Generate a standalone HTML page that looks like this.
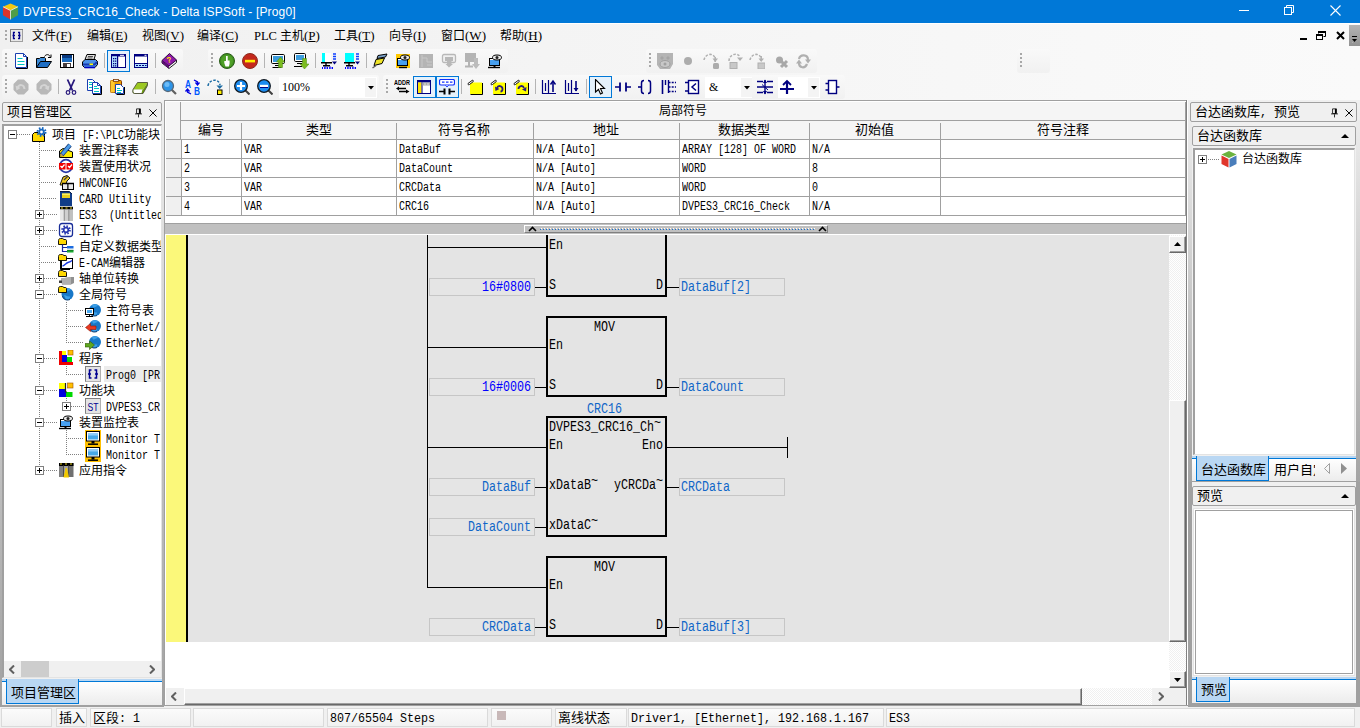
<!DOCTYPE html>
<html lang="zh-CN"><head><meta charset="utf-8"><title>DVPES3_CRC16_Check - Delta ISPSoft - [Prog0]</title>
<style>
html,body{margin:0;padding:0}
body{width:1360px;height:728px;overflow:hidden;background:#f0f0f0;position:relative;
 font:12px "Liberation Mono","Noto Sans CJK SC",monospace;color:#000;line-height:1}
div,span,svg{position:absolute;box-sizing:border-box;white-space:nowrap}
span.l12,span.l13,span.l14{position:static;display:inline-block;transform-origin:0 50%;font-family:"Liberation Mono",monospace}
span.l12{transform:scaleX(.8333)}
span.l13{transform:scaleX(.8974)}
span.l14{transform:scaleX(.8333)}
.t{position:absolute;line-height:14px;height:14px}
.f13{font-size:13px}
.f14{font-size:14px}
/* title bar */
#title{left:0;top:0;width:1360px;height:23px;background:#0078d7}
#title .cap{left:23px;top:5px;font:12px "Liberation Sans",sans-serif;color:#fff;letter-spacing:.15px;line-height:14px}
/* menu */
#menu{left:0;top:23px;width:1360px;height:78px;background:linear-gradient(90deg,#f0f0f0,#fafafa)}
#menu .mi{top:6px;font:12px "Liberation Serif","Noto Sans CJK SC",serif;line-height:14px}
#menu .mi i{font-style:normal;font-size:13px}
#menu .mi u{text-decoration:underline}
/* toolbars */
.tb{background:linear-gradient(#f9f9f9,#f1f1f1);border-radius:3px;height:24px}
.grip{width:2px;height:16px;top:4px;background:repeating-linear-gradient(#a8a8a8 0,#a8a8a8 2px,transparent 2px,transparent 4px)}
.sep{width:1px;height:15px;top:4px;background:#b4b4b4}
.sel{background:#e5f1fb;border:1px solid #0078d7}
.ic{width:16px;height:16px}
/* panels */
.hdr{border:1px solid #a0a0a0;border-radius:2px;background:#f0f0f0}
.sunk{background:#fff;border:2px solid #a0a0a0;border-right:1px solid #e3e3e3;border-bottom:1px solid #e3e3e3}
.tabstrip{background:linear-gradient(#fff,#ececec);border-top:2px solid #b9d7f3}
.tabstrip:before{content:'';position:absolute;left:0;right:0;top:0;height:1px;background:#0078d7}
.tab{background:#b9d7f3;border:1px solid #0078d7;border-top:none}
.sp{background:#f0f0f0;border:1px solid #fff;box-shadow:inset -1px -1px 0 #a0a0a0, 1px 1px 0 #696969}
.td{font-style:normal;position:relative;top:-4px}
</style></head>
<body>
<div id="title"><svg style="left:2px;top:3px" width="17" height="17" viewBox="0 0 18 18"><path d="M9 0.5 L17 4 L9 8 L1 4Z" fill="#f2c811"/><path d="M1 4 L9 8 L9 17.5 L1 13Z" fill="#d8342c"/><path d="M17 4 L9 8 L9 17.5 L17 13Z" fill="#4f9d4a"/><path d="M9 8 L9 17.5 M1 4 L9 8 L17 4" stroke="#fff" stroke-width=".8" fill="none"/></svg><div class="cap">DVPES3_CRC16_Check - Delta ISPSoft - [Prog0]</div><svg style="left:1239px;top:10px" width="11" height="2"><rect width="10" height="1" fill="#fff"/></svg><svg style="left:1284px;top:5px" width="10" height="10" viewBox="0 0 10 10" fill="none" stroke="#fff" stroke-width="1"><rect x=".5" y="2.5" width="7" height="7"/><path d="M2.5 2.5V.5H9.5V7.5H7.5"/></svg><svg style="left:1330px;top:5px" width="11" height="11" viewBox="0 0 11 11" stroke="#fff" stroke-width="1.1"><path d="M.5 .5L10.5 10.5M10.5 .5L.5 10.5"/></svg></div>
<div id="menu"><div style="left:0;top:0;width:1360px;height:1px;background:#fff"></div><div class="grip" style="left:5px;top:7px;height:11px"></div><svg style="left:10px;top:6px" width="13" height="13" viewBox="0 0 13 13"><rect x=".5" y=".5" width="12" height="12" fill="#e8e8e8" stroke="#a0a0a0"/><rect x="0" y="0" width="13" height="1" fill="#808080"/><rect x="0" y="0" width="1" height="13" fill="#808080"/><path d="M5 3.5H3.5V9.5H5M8 3.5H9.5V9.5H8M2.5 6.5H5M8 6.5H10.5" stroke="#00008b" stroke-width="1.3" fill="none"/></svg><div class="mi" style="left:32px">文件<i>(<u>F</u>)</i></div><div class="mi" style="left:87px">编辑<i>(<u>E</u>)</i></div><div class="mi" style="left:142px">视图<i>(<u>V</u>)</i></div><div class="mi" style="left:197px">编译<i>(<u>C</u>)</i></div><div class="mi" style="left:254px"><i style="font-size:12.5px">PLC</i> 主机<i>(<u>P</u>)</i></div><div class="mi" style="left:334px">工具<i>(<u>T</u>)</i></div><div class="mi" style="left:389px">向导<i>(<u>I</u>)</i></div><div class="mi" style="left:441px">窗口<i>(<u>W</u>)</i></div><div class="mi" style="left:500px">帮助<i>(<u>H</u>)</i></div><svg style="left:1300px;top:15px" width="8" height="2"><rect width="7" height="2" fill="#000"/></svg><svg style="left:1316px;top:8px" width="10" height="10" viewBox="0 0 10 10" fill="none" stroke="#000"><rect x=".5" y="3.5" width="6" height="5"/><path d="M0 4H7" stroke-width="2"/><path d="M2.5 2.5V.5H9.5V5.5H7.5"/><path d="M2 1H10" stroke-width="2"/></svg><svg style="left:1336px;top:8px" width="9" height="9" viewBox="0 0 9 9" stroke="#000" stroke-width="2"><path d="M1 1L8 8M8 1L1 8"/></svg><div style="left:1349px;top:2px;width:11px;height:21px;background:linear-gradient(#b4b4b4,#929292)"></div><svg style="left:1352px;top:13px" width="5" height="7" viewBox="0 0 5 7"><rect x="0" y="0" width="5" height="1" fill="#000"/><path d="M0 3H5L2.5 6Z" fill="#000"/><path d="M0 6.500L2.500 9" stroke="#fff"/></svg></div>
<div class="tb" style="left:2px;top:49px;width:181px"><div class="grip" style="left:3px"></div><svg class="ic" style="left:11px;top:4px" viewBox="0 0 16 16"><path d="M3 15.5H14.5V4" stroke="#000" fill="none"/><path d="M2.5 .5H10.5L13.5 3.5V14.5H2.5Z" fill="#fff" stroke="#1a3fb0"/><path d="M10.5 .5V3.5H13.5" fill="none" stroke="#1a3fb0"/><path d="M4.5 5.5H9.5M4.5 8.5H11.5M4.5 11.5H11.5" stroke="#00c4c4"/></svg><svg class="ic" style="left:34px;top:4px" viewBox="0 0 16 16"><path d="M.5 14.5V5.5H3.5L4.5 4.5H8.5L9.5 5.5V8" fill="#3a8ad8" stroke="#000"/><path d="M.5 14.5L4.5 8.5H15.5L11.5 14.5Z" fill="#1e6ec4" stroke="#000"/><path d="M8.5 3.5C10 1 13 1 14 3.5" fill="none" stroke="#000"/><path d="M12 4.5H15V1.5" fill="none" stroke="#000"/></svg><svg class="ic" style="left:57px;top:4px" viewBox="0 0 16 16"><rect x="1.5" y="1.5" width="13" height="13" fill="#fff" stroke="#000"/><rect x="3" y="2" width="10" height="7" fill="#1a6cc0"/><rect x="3" y="2" width="10" height="3" fill="#0a3a80"/><rect x="4" y="10" width="8" height="4" fill="#4a4040"/><rect x="8" y="11" width="3" height="3" fill="#fff"/></svg><svg class="ic" style="left:80px;top:4px" viewBox="0 0 16 16"><path d="M5 1.5H13.5L12 6.5H3Z" fill="#e0e0e0" stroke="#000"/><path d="M6 3.5H11M5.5 5H10.5" stroke="#505050"/><path d="M.5 9L3 6.5H13.5L15.5 8.5V11.5L13 14.5H2.5L.5 12.5Z" fill="#4a90e8" stroke="#000"/><path d="M1 11.5H12.5L15 9" fill="none" stroke="#1a3ab0" stroke-width="2"/><rect x="7.5" y="10.5" width="3.5" height="1.5" fill="#ff0"/><path d="M2.5 14.5H13" stroke="#0000c0" stroke-width="1.6"/></svg><div class="sep" style="left:102px"></div><div class="sel" style="left:105px;top:1px;width:23px;height:22px"></div><svg class="ic" style="left:109px;top:4px" viewBox="0 0 16 16"><rect x=".5" y="1.5" width="14" height="13" fill="#fff" stroke="#000080"/><rect x="0" y="1" width="15" height="2.5" fill="#000080"/><rect x="1" y="3.5" width="5" height="10.5" fill="#b0e0ff"/><rect x="6" y="3" width="1.2" height="11" fill="#000080"/><path d="M2 5h1.3v1.3H2zM4 5h1.3v1.3H4zM2 7.5h1.3v1.3H2zM4 7.5h1.3v1.3H4zM2 10h1.3v1.3H2zM4 10h1.3v1.3H4zM2 12.2h1.3v1.3H2zM4 12.2h1.3v1.3H4z" fill="#000080"/><rect x="9" y="1.8" width="4" height="1" fill="#fff"/></svg><svg class="ic" style="left:131px;top:4px" viewBox="0 0 16 16"><rect x="1.5" y="1.5" width="13" height="13" fill="#fff" stroke="#000080"/><rect x="1" y="1" width="14" height="2.5" fill="#000080"/><rect x="11.5" y="1.8" width="2" height="1" fill="#fff"/><rect x="2" y="10.5" width="12" height="3.5" fill="#b0e0ff"/><rect x="2" y="10" width="12" height="1" fill="#000080"/><path d="M3 12.5h2M6 12.5h2M9 12.5h2M12 12.5h1.5" stroke="#000080"/></svg><div class="sep" style="left:153px"></div><svg class="ic" style="left:159px;top:4px" viewBox="0 0 16 16"><path d="M1 7.5V10L8 15.5L15.5 9.5V7" fill="#f4f4f4" stroke="#202020"/><path d="M1 7.5L8.5 .5L15.5 7L8 13Z" fill="#8c18a8" stroke="#30083c"/><path d="M1 7.5L8 13V15.5L1 10Z" fill="#5c0c74"/><text x="8.2" y="9.5" font-family="Liberation Sans,sans-serif" font-size="8" font-weight="bold" fill="#ffe800" text-anchor="middle" transform="rotate(-12 8 7)">?</text></svg></div>
<div class="tb" style="left:208px;top:49px;width:300px"><div class="grip" style="left:3px"></div><svg class="ic" style="left:11px;top:4px" viewBox="0 0 16 16"><circle cx="8" cy="8" r="7.5" fill="#3f8f1f" stroke="#2c5c1c"/><circle cx="8" cy="8" r="6" fill="#4fa028"/><path d="M7 3h1.7v4.5h1.9V10.5L9.9 13.5H6.5L5.3 10V8H7Z" fill="#fff"/></svg><svg class="ic" style="left:34px;top:4px" viewBox="0 0 16 16"><circle cx="8" cy="8" r="7.5" fill="#c4281c" stroke="#8c2c1c"/><rect x="3" y="6.8" width="10" height="2.6" fill="#ffee00"/></svg><div class="sep" style="left:56px"></div><svg class="ic" style="left:62px;top:4px" viewBox="0 0 16 16"><rect x="1.5" y="1.5" width="13" height="9" rx="1.2" fill="#fff" stroke="#000"/><rect x="3" y="3" width="10" height="6" fill="#3c9cdc"/><path d="M5 12.5h5M2.5 14.5h9" stroke="#000"/><path d="M10.5 4L14.5 9H12.5V14.5H8.5V9H6.5Z" fill="#7cbc20" stroke="#4c8c10" stroke-width=".5"/></svg><svg class="ic" style="left:85px;top:4px" viewBox="0 0 16 16"><rect x="1.5" y=".5" width="11" height="8" rx="1.2" fill="#fff" stroke="#000"/><rect x="3" y="2" width="8" height="5" fill="#3c9cdc"/><path d="M4 10.5h5M1 13.5h8" stroke="#000"/><path d="M9.5 5.5h4V11H16L11.5 16L7 11H9.5Z" fill="#7cbc20" stroke="#4c8c10" stroke-width=".5"/></svg><div class="sep" style="left:107px"></div><svg class="ic" style="left:113px;top:4px" viewBox="0 0 16 16"><rect x="1" y="0" width="9" height="9" fill="#fff"/><rect x="1" y="0" width="3" height="9" fill="#0ff"/><path d="M0 9.7h11M5 10v2.5M2 12.7h7" stroke="#000" stroke-width="1.4" fill="none"/><path d="M12 1h3M12 3.5h3M12 6h3" stroke="#1040ff" stroke-width="1.5"/><path d="M11 8.5h5L13.5 11.5Z" fill="#000080"/><path d="M1.5 14v2M6.5 14v2M11.5 14v2" stroke="#00f"/><path d="M3.5 14h1.5v2H3.5zM8.5 14H10v2H8.5z" fill="none" stroke="#00f" stroke-width=".8"/></svg><svg class="ic" style="left:136px;top:4px" viewBox="0 0 16 16"><rect x="1" y="0" width="9" height="9" fill="#0ff"/><path d="M0 9.7h11M5 10v2.5M2 12.7h7" stroke="#000" stroke-width="1.4" fill="none"/><path d="M12 1h3M12 3.5h3M12 6h3" stroke="#1040ff" stroke-width="1.5"/><path d="M11 8.5h5L13.5 11.5Z" fill="#000080"/><path d="M1.5 14v2M6.5 14v2M11.5 14v2" stroke="#00f"/><path d="M3.5 14h1.5v2H3.5zM8.5 14H10v2H8.5z" fill="none" stroke="#00f" stroke-width=".8"/></svg><div class="sep" style="left:158px"></div><svg class="ic" style="left:164px;top:4px" viewBox="0 0 16 16"><path d="M6 2.5L15 1L13.5 4L5 5.5Z" fill="#7ca4cc" stroke="#000"/><path d="M4 6.5L12.5 5L10 10.5L2 12.5Z" fill="#f0e428" stroke="#000"/><path d="M.5 15L4 12.5" stroke="#606060" stroke-width="1.5"/></svg><svg class="ic" style="left:187px;top:4px" viewBox="0 0 16 16"><rect x="1" y="1" width="14" height="14" fill="#ffc800"/><rect x="2.5" y="5.5" width="10" height="7" fill="#48a0f0" stroke="#000"/><path d="M3 6.5h9" stroke="#fff"/><path d="M4 14.5h8" stroke="#000" stroke-width="1.4"/><ellipse cx="10" cy="4.5" rx="4.5" ry="2.5" fill="#e8e8e8" stroke="#000"/><circle cx="10" cy="4.5" r="1.5" fill="#202020"/></svg><svg class="ic" style="left:210px;top:4px" viewBox="0 0 16 16"><rect x="1" y="1" width="14" height="14" fill="#b4b4b4"/><path d="M4 2v12M4 5h5v4h5M9 12h5" stroke="#c8c8c8" fill="none"/></svg><svg class="ic" style="left:233px;top:4px" viewBox="0 0 16 16"><rect x="1.5" y="1.5" width="13" height="8" rx="1.5" fill="#f0f0f0" stroke="#b8b8b8" stroke-width="1.3"/><path d="M4 4h8v4H10.5v3H12L8 14.5L4.5 11H6V8H4Z" fill="#b8b8b8"/></svg><svg class="ic" style="left:256px;top:4px" viewBox="0 0 16 16"><rect x="1" y="0" width="11" height="9" fill="#b4b4b4"/><path d="M1 13.5h8M5 9v4" stroke="#b4b4b4" stroke-width="2"/><path d="M10 5h4v6h2L12 16L8 11h2Z" fill="#bcbcbc"/></svg><svg class="ic" style="left:279px;top:4px" viewBox="0 0 16 16"><rect x="2.5" y="5.5" width="10" height="7" fill="#48a0f0" stroke="#000"/><path d="M3 6.5h9" stroke="#fff"/><path d="M1 14.5h12" stroke="#000" stroke-width="1.4"/><path d="M7.5 12.5v2" stroke="#000" stroke-width="2"/><ellipse cx="10" cy="4.5" rx="4.5" ry="2.5" fill="#e8e8e8" stroke="#000"/><circle cx="10" cy="4.5" r="1.5" fill="#202020"/></svg></div>
<div class="tb" style="left:646px;top:49px;width:171px"><div class="grip" style="left:3px"></div><svg class="ic" style="left:11px;top:4px" viewBox="0 0 16 16"><path d="M0 0H16V11L13 16H3L0 12Z" fill="#b4b4b4"/><ellipse cx="8" cy="11" rx="5" ry="3.5" fill="#c8c8c8" stroke="#a0a0a0"/><circle cx="8" cy="11" r="1.5" fill="#a0a0a0"/><path d="M3 5l2-2 2 2-2 2zM9 5l2-2 2 2-2 2z" fill="#a4a4a4"/></svg><svg class="ic" style="left:34px;top:4px" viewBox="0 0 16 16"><circle cx="8" cy="8" r="4" fill="#acacac"/></svg><svg class="ic" style="left:57px;top:4px" viewBox="0 0 16 16"><path d="M1 7C2 1 10 -1 12 5" fill="none" stroke="#b0b0b0" stroke-width="1.5" stroke-dasharray="2.5 1.5"/><path d="M9.5 5.5H15L12.2 9Z" fill="#b0b0b0"/><path d="M12.2 4v5" stroke="#b0b0b0" stroke-width="1.5"/><rect x="10" y="10" width="6" height="6" rx="1.5" fill="#acacac"/></svg><svg class="ic" style="left:81px;top:4px" viewBox="0 0 16 16"><path d="M2 8C2 1 11 -1 13 4" fill="none" stroke="#b0b0b0" stroke-width="1.5" stroke-dasharray="2.5 1.5"/><path d="M10 4.5H16L13 8Z" fill="#b0b0b0"/><rect x="3" y="9.5" width="7" height="6" fill="#c8c8c8" stroke="#b0b0b0"/></svg><svg class="ic" style="left:103px;top:4px" viewBox="0 0 16 16"><path d="M1 7C2 1 10 -1 12 5" fill="none" stroke="#b0b0b0" stroke-width="1.5" stroke-dasharray="2.5 1.5"/><path d="M9.5 5.5H15L12.2 9Z" fill="#b0b0b0"/><path d="M12.2 3v5" stroke="#b0b0b0" stroke-width="1.5"/><rect x="9" y="10" width="7" height="6" fill="#c8c8c8" stroke="#b0b0b0"/></svg><svg class="ic" style="left:128px;top:4px" viewBox="0 0 16 16"><circle cx="5.5" cy="7" r="3.5" fill="#a8a8a8"/><path d="M7 8l6 6M13 8l-6 6" stroke="#a8a8a8" stroke-width="3"/></svg><svg class="ic" style="left:149px;top:4px" viewBox="0 0 16 16"><path d="M4 6C5 1 13 1 13 7" fill="none" stroke="#b0b0b0" stroke-width="2.2"/><path d="M10 6.5h6L13 10.5Z" fill="#b0b0b0"/><path d="M12 11C10 16 4 15 4 10" fill="none" stroke="#b0b0b0" stroke-width="2.2"/><path d="M1 10.5h6L4 6.5Z" fill="#b0b0b0"/></svg></div>
<div class="tb" style="left:1017px;top:49px;width:33px"><div class="grip" style="left:3px"></div></div>
<div class="tb" style="left:2px;top:75px;width:377px"><div class="grip" style="left:3px"></div><svg class="ic" style="left:11px;top:4px" viewBox="0 0 16 16"><path d="M5 .5H11L15.5 5V11L11 15.5H5L.5 11V5Z" fill="#b8b8b8"/><path d="M4.5 9C6 5 11 5 11.5 10" fill="none" stroke="#d4d4d4" stroke-width="2"/><path d="M2.5 6.5L3.5 11.5L7.5 9Z" fill="#d4d4d4"/></svg><svg class="ic" style="left:34px;top:4px" viewBox="0 0 16 16"><path d="M5 .5H11L15.5 5V11L11 15.5H5L.5 11V5Z" fill="#b8b8b8"/><path d="M11.5 9C10 5 5 5 4.5 10" fill="none" stroke="#d4d4d4" stroke-width="2"/><path d="M13.5 6.5L12.5 11.5L8.5 9Z" fill="#d4d4d4"/></svg><div class="sep" style="left:56px"></div><svg class="ic" style="left:61px;top:4px" viewBox="0 0 16 16"><path d="M4.5 .5L9.5 11.5M11.5 .5L6.5 11.5" stroke="#28187c" stroke-width="1.8" fill="none"/><circle cx="5" cy="13.5" r="1.8" fill="none" stroke="#28187c" stroke-width="1.2"/><circle cx="11" cy="13.5" r="1.8" fill="none" stroke="#28187c" stroke-width="1.2"/></svg><svg class="ic" style="left:84px;top:4px" viewBox="0 0 16 16"><path d="M1.5 .5H6.5L9.5 3.5V11.5H1.5Z" fill="#fff" stroke="#1a3fb0"/><path d="M3 3.5h3M3 5.5h3M3 8.5h3" stroke="#00c4c4"/><path d="M7 15.5H15.5V7" stroke="#000" fill="none"/><path d="M6.5 3.5H11.5L14.5 6.5V14.5H6.5Z" fill="#fff" stroke="#1a3fb0"/><path d="M11.5 3.5V6.5H14.5" fill="none" stroke="#1a3fb0"/><path d="M8 7.5h3M8 9.5h5M8 12.5h5" stroke="#00c4c4"/></svg><svg class="ic" style="left:107px;top:4px" viewBox="0 0 16 16"><rect x="1.5" y="1.5" width="11" height="12" rx="1" fill="#f0a000" stroke="#803800"/><rect x="1.5" y="1.5" width="4" height="12" fill="#ffc830"/><rect x="4.5" y=".5" width="5" height="2" fill="#e8e8e8" stroke="#803800" stroke-width=".8"/><path d="M7.5 15.5H15.5V8" stroke="#000" fill="none"/><path d="M6.5 5.5H11.5L14.5 8.5V14.5H6.5Z" fill="#fff" stroke="#1a3fb0"/><path d="M8 9.5h3M8 11.5h5M8 13.5h4" stroke="#00c4c4"/></svg><svg class="ic" style="left:130px;top:4px" viewBox="0 0 16 16"><path d="M1 10.5L5.5 3.5H15.5L11 10.5Z" fill="#9cc820"/><path d="M1 10.5H11L15.5 3.5V6.5L11 14.5H2.5C.5 14.5 .5 12 1 10.5Z" fill="#6c9810"/><path d="M1.5 10.5H10.5L9.5 14H2.5C1 14 1 12 1.5 10.5Z" fill="#fff"/><path d="M1 10.5L5.5 3.5H15.5V6.5L11 14.5H2.5C.5 14.5 .5 12 1 10.5Z" fill="none" stroke="#404030" stroke-width=".8"/></svg><div class="sep" style="left:153px"></div><svg class="ic" style="left:159px;top:4px" viewBox="0 0 16 16"><path d="M10.5 10.5L15 15" stroke="#606060" stroke-width="2.2"/><circle cx="7" cy="7" r="5.5" fill="#2c94e8" stroke="#586878" stroke-width="1.3"/><circle cx="6" cy="5.5" r="2.5" fill="#6cbcf8"/></svg><svg class="ic" style="left:182px;top:4px" viewBox="0 0 16 16"><text x="1" y="8.5" font-family="Liberation Sans,sans-serif" font-size="11" font-weight="bold" fill="#0058ff" textLength="6" lengthAdjust="spacingAndGlyphs">A</text><text x="10" y="15.8" font-family="Liberation Sans,sans-serif" font-size="10.5" font-weight="bold" fill="#0058ff" textLength="6" lengthAdjust="spacingAndGlyphs">B</text><path d="M10 1L13.5 3V5.5M11.5 3.5L13.5 6L15.5 3.5" fill="none" stroke="#0000e0" stroke-width="1.3"/><path d="M7 15L3.5 13V10.5M1.5 12.5L3.5 10L5.5 12.5" fill="none" stroke="#0000e0" stroke-width="1.3"/></svg><svg class="ic" style="left:205px;top:4px" viewBox="0 0 16 16"><path d="M1 7C2 0 12 -1 13 6" fill="none" stroke="#1c6ca4" stroke-width="1.5" stroke-dasharray="2.5 1.5"/><path d="M9.5 6.5H16L12.7 10Z" fill="#1c6ca4"/><rect x="10.5" y="11" width="4.5" height="4.5" fill="#ffee00" stroke="#000"/></svg><div class="sep" style="left:227px"></div><svg class="ic" style="left:232px;top:4px" viewBox="0 0 16 16"><path d="M11 11L15.5 15.5" stroke="#404040" stroke-width="2"/><circle cx="7" cy="7" r="6.3" fill="#1c8cf0" stroke="#101820" stroke-width="1.3"/><path d="M3 7h8M7 3v8" stroke="#fff" stroke-width="2.2"/></svg><svg class="ic" style="left:255px;top:4px" viewBox="0 0 16 16"><path d="M11 11L15.5 15.5" stroke="#404040" stroke-width="2"/><circle cx="7" cy="7" r="6.3" fill="#1c8cf0" stroke="#101820" stroke-width="1.3"/><path d="M3 7h8" stroke="#fff" stroke-width="2.4"/><path d="M3 8.5h8" stroke="#000080"/></svg><div style="left:277px;top:2px;width:98px;height:21px;background:#fff"></div><div style="left:280px;top:5px;font:12px 'Liberation Serif',serif;line-height:14px">100%</div><div style="left:363px;top:3px;width:11px;height:19px;background:#f4f4f4"></div><svg style="left:366px;top:11px" width="6" height="4"><path d="M0 0H6L3 3.5Z"/></svg></div>
<div class="tb" style="left:383px;top:75px;width:462px"><div class="grip" style="left:3px"></div><svg class="ic" style="left:11px;top:4px" viewBox="0 0 16 16"><text x="0" y="6" font-family="Liberation Sans,sans-serif" font-size="6.5" font-weight="bold" fill="#000" textLength="16" lengthAdjust="spacingAndGlyphs">ADDR</text><path d="M4 9.5H12M5 12.5H13" stroke="#000" stroke-width="1.5"/><path d="M5 7.5L2 9.5L5 11.5ZM12 10.5L15.5 12.5L12 14.5Z" fill="#000"/></svg><div class="sel" style="left:30px;top:1px;width:23px;height:22px"></div><div class="sel" style="left:53px;top:1px;width:23px;height:22px"></div><svg class="ic" style="left:33px;top:4px" viewBox="0 0 16 16"><rect x="1.5" y="1.5" width="13" height="13" fill="#fff" stroke="#000080"/><rect x="1" y="1" width="14" height="2.5" fill="#000080"/><rect x="2" y="3.5" width="3.5" height="10.5" fill="#ffe400"/><rect x="5.5" y="3.5" width="1" height="10.5" fill="#000080"/><rect x="6.5" y="3.5" width="7.5" height="3" fill="#a8a8a8"/><path d="M8 5h2M11 5h2" stroke="#e0e0e0"/></svg><svg class="ic" style="left:56px;top:4px" viewBox="0 0 16 16"><rect x=".5" y=".5" width="15" height="5.5" rx="1.5" fill="#fff" stroke="#1030ff" stroke-width="1.2"/><path d="M6.5 6L8 8L9.5 6" fill="#fff" stroke="#1030ff"/><path d="M3 3.2h2.5M7 3.2h2.5M11 3.2h2.5" stroke="#1030ff" stroke-width="1.2"/><path d="M0 12.5h5.5M10.5 12.5H16" stroke="#000" stroke-width="1.6"/><path d="M5.5 9.5v6M10.5 9.5v6" stroke="#000" stroke-width="2"/></svg><div class="sep" style="left:78px"></div><svg class="ic" style="left:84px;top:4px" viewBox="0 0 16 16"><path d="M3.5 15.5H15.5V4" stroke="#000" fill="none"/><rect x="3" y="3.5" width="12" height="11.5" fill="#ffff00"/><path d="M1 4.5L5 1.5C6 .8 7 2 6 2.8L2.5 5.5C1.5 6.2 .3 5.2 1 4.5Z" fill="#fff" stroke="#000" stroke-width=".9"/></svg><svg class="ic" style="left:107px;top:4px" viewBox="0 0 16 16"><path d="M3.5 15.5H15.5V4" stroke="#000" fill="none"/><rect x="3" y="3.5" width="12" height="11.5" fill="#ffff00"/><path d="M1 4.5L5 1.5C6 .8 7 2 6 2.8L2.5 5.5C1.5 6.2 .3 5.2 1 4.5Z" fill="#fff" stroke="#000" stroke-width=".9"/><path d="M7 9C8 6 12.5 6.5 12.5 10C12.5 12 11 12.5 10.5 12.5" fill="none" stroke="#28187c" stroke-width="1.8"/><path d="M5 7.5L5.5 12L9.5 10Z" fill="#28187c"/></svg><svg class="ic" style="left:130px;top:4px" viewBox="0 0 16 16"><path d="M3.5 15.5H15.5V4" stroke="#000" fill="none"/><rect x="3" y="3.5" width="12" height="11.5" fill="#ffff00"/><path d="M1 4.5L5 1.5C6 .8 7 2 6 2.8L2.5 5.5C1.5 6.2 .3 5.2 1 4.5Z" fill="#fff" stroke="#000" stroke-width=".9"/><path d="M11 9C10 6 5.5 6.5 5.5 10" fill="none" stroke="#28187c" stroke-width="1.8"/><path d="M13.5 8L13 12.5L9 10.5Z" fill="#28187c"/></svg><div class="sep" style="left:152px"></div><svg class="ic" style="left:158px;top:4px" viewBox="0 0 16 16"><path d="M1.5 1v14M1 14.5h14" stroke="#000080" stroke-width="1.2" fill="none"/><path d="M4.5 4v8M7.5 1v13" stroke="#000080" stroke-width="1.2"/><path d="M12 3v10" stroke="#000080" stroke-width="1.6"/><path d="M9.5 5.5L12 2L14.5 5.5" fill="none" stroke="#000080" stroke-width="1.4"/></svg><svg class="ic" style="left:181px;top:4px" viewBox="0 0 16 16"><path d="M1.5 1v14M1 14.5h14" stroke="#000080" stroke-width="1.2" fill="none"/><path d="M4.5 4v8M7.5 1v13" stroke="#000080" stroke-width="1.2"/><path d="M12 2v10" stroke="#000080" stroke-width="1.6"/><path d="M9.5 9L12 12.5L14.5 9Z" fill="#000080"/></svg><div class="sep" style="left:203px"></div><div class="sel" style="left:206px;top:1px;width:23px;height:22px"></div><svg class="ic" style="left:209px;top:4px" viewBox="0 0 16 16"><path d="M3.5 .5V13L6.5 10.5L8.5 15L10.5 14L8.5 9.5H12.5Z" fill="#fff" stroke="#000" stroke-width="1.100"/></svg><svg class="ic" style="left:232px;top:4px" viewBox="0 0 16 16"><path d="M0 8h5M11 8h5" stroke="#000080" stroke-width="1.6"/><path d="M5 3.5v9M11 3.5v9" stroke="#000080" stroke-width="1.8"/></svg><svg class="ic" style="left:255px;top:4px" viewBox="0 0 16 16"><path d="M0 8h3" stroke="#000080" stroke-width="1.6"/><path d="M6 1.5C3.5 1.5 3.5 3 3.5 4V12C3.5 13 3.5 14.5 6 14.5M10 1.5C12.5 1.5 12.5 3 12.5 4V12C12.5 13 12.5 14.5 10 14.5" fill="none" stroke="#000080" stroke-width="1.5"/></svg><svg class="ic" style="left:278px;top:4px" viewBox="0 0 16 16"><path d="M1.5 1v14" stroke="#000080" stroke-width="1.6"/><path d="M4.5 1v5M7.5 1v13" stroke="#000080" stroke-width="1.4"/><path d="M7.5 3.5H15M7.5 8H15M7.5 12.5H15" stroke="#000080" stroke-width="1.4" stroke-dasharray="2 1.2"/></svg><svg class="ic" style="left:301px;top:4px" viewBox="0 0 16 16"><rect x="4.5" y="1.5" width="10" height="13" fill="#fff" stroke="#000080" stroke-width="1.4"/><path d="M1 3.5h4M1 12h4" stroke="#000080" stroke-width="1.5"/><path d="M12 4.5L8 8L12 11.5" fill="none" stroke="#000080" stroke-width="1.5"/></svg><div style="left:322px;top:2px;width:47px;height:21px;background:#fff"></div><div style="left:326px;top:5px;font:12px 'Liberation Serif',serif;line-height:14px">&amp;</div><div style="left:358px;top:3px;width:11px;height:19px;background:#f4f4f4"></div><svg style="left:361px;top:11px" width="6" height="4"><path d="M0 0H6L3 3.5Z"/></svg><svg class="ic" style="left:374px;top:4px" viewBox="0 0 16 16"><path d="M0 2.5h6M10 2.5h6M0 8h16M0 13.5h6M10 13.5h6" stroke="#000080" stroke-width="1.4"/><path d="M8 1v14" stroke="#000080" stroke-width="1.4"/><path d="M5 5.5L11 11" stroke="#000080"/><path d="M6 12h4L8 15.5Z" fill="#000080"/><path d="M6 4h4L8 .5Z" fill="#000080"/></svg><div style="left:395px;top:2px;width:42px;height:21px;background:#fff"></div><div style="left:425px;top:3px;width:11px;height:19px;background:#f4f4f4"></div><svg style="left:428px;top:11px" width="6" height="4"><path d="M0 0H6L3 3.5Z"/></svg><svg class="ic" style="left:396px;top:4px" viewBox="0 0 16 16"><path d="M1 10h14" stroke="#000080" stroke-width="2"/><path d="M8 2.5V15" stroke="#000080" stroke-width="2.2"/><path d="M4 6L8 2L12 6" fill="none" stroke="#000080" stroke-width="1.8"/></svg><svg class="ic" style="left:441px;top:4px" viewBox="0 0 16 16"><rect x="4.5" y="1.5" width="8" height="13" fill="#fff" stroke="#000080" stroke-width="1.4"/><path d="M1.5 4.5h3M1.5 11h3M12.5 8h3" stroke="#000080" stroke-width="1.4"/></svg></div>
<div id="left" style="left:0;top:101px;width:166px;height:606px"><div class="hdr" style="left:2px;top:1px;width:160px;height:20px"></div><div class="t f13" style="left:7px;top:5px">项目管理区</div><svg style="left:135px;top:7px" width="7" height="9.500" viewBox="0 0 9 12"><path d="M2 1H7V7H2Z" fill="none" stroke="#000"/><rect x="5" y="1" width="2" height="6"/><rect x="0" y="7" width="9" height="1"/><rect x="4" y="8" width="1" height="4"/></svg><svg style="left:149px;top:8px" width="8" height="8" viewBox="0 0 9 9" stroke="#000" stroke-width="1.1"><path d="M.5 .5L8.5 8.5M8.5 .5L.5 8.5"/></svg><div class="sunk" style="left:2px;top:23px;width:160px;height:554px;overflow:hidden"><div style="left:35px;top:16px;width:1px;height:328px;background:repeating-linear-gradient(#808080 0,#808080 1px,transparent 1px,transparent 2px)"></div><div style="left:62px;top:176px;width:1px;height:40px;background:repeating-linear-gradient(#808080 0,#808080 1px,transparent 1px,transparent 2px)"></div><div style="left:62px;top:240px;width:1px;height:8px;background:repeating-linear-gradient(#808080 0,#808080 1px,transparent 1px,transparent 2px)"></div><div style="left:62px;top:272px;width:1px;height:8px;background:repeating-linear-gradient(#808080 0,#808080 1px,transparent 1px,transparent 2px)"></div><div style="left:62px;top:304px;width:1px;height:24px;background:repeating-linear-gradient(#808080 0,#808080 1px,transparent 1px,transparent 2px)"></div><div style="left:13px;top:8px;width:13px;height:1px;background:repeating-linear-gradient(90deg,#808080 0,#808080 1px,transparent 1px,transparent 2px)"></div><svg style="left:4px;top:4px" width="9" height="9" viewBox="0 0 9 9"><rect x=".5" y=".5" width="8" height="8" fill="#fff" stroke="#808080"/><rect x="2" y="4" width="5" height="1"/></svg><svg class="ic" style="left:27px;top:0px" viewBox="0 0 16 16"><path d="M1.5 15.5V8.5L3.5 6.5H7L8 7.5H13.5V15.5Z" fill="#ffd800" stroke="#000"/><circle cx="10.5" cy="6" r="4" fill="none" stroke="#1868c0" stroke-width="2" stroke-dasharray="1.6 1.540"/><circle cx="10.5" cy="6" r="2.3" fill="#fff" stroke="#1868c0" stroke-width="1.8"/></svg><div class="t" style="left:48px;top:3px">项目<span class="l12" style="margin-right:-9.6px">&nbsp;[F:\PLC</span>功能块</div><div style="left:35px;top:24px;width:18px;height:1px;background:repeating-linear-gradient(90deg,#808080 0,#808080 1px,transparent 1px,transparent 2px)"></div><svg class="ic" style="left:54px;top:16px" viewBox="0 0 16 16"><path d="M1.5 15.5V9L5 6.5L14.5 10V15.5Z" fill="#ffee00" stroke="#000"/><path d="M3.5 13L12 3" stroke="#183c78" stroke-width="4.5"/><path d="M4 12.5L12 3" stroke="#4c9ce8" stroke-width="2.8"/><path d="M2.5 14.5L3 11.5L5.5 13.5Z" fill="#e8c090" stroke="#503010" stroke-width=".5"/></svg><div class="t" style="left:75px;top:19px">装置注释表</div><div style="left:35px;top:40px;width:18px;height:1px;background:repeating-linear-gradient(90deg,#808080 0,#808080 1px,transparent 1px,transparent 2px)"></div><svg class="ic" style="left:54px;top:32px" viewBox="0 0 16 16"><circle cx="8" cy="8" r="6.3" fill="#fff" stroke="#2838a8" stroke-width="1.7"/><rect x="1" y="5" width="6.5" height="6.5" fill="#f00000"/><rect x="8.5" y="5" width="6.5" height="6.5" fill="#f00000"/><path d="M2.5 8L4 9.5L6.5 6.5M10 8L11.5 9.5L14 6.5" fill="none" stroke="#fff" stroke-width="1.2"/></svg><div class="t" style="left:75px;top:35px">装置使用状况</div><div style="left:35px;top:56px;width:18px;height:1px;background:repeating-linear-gradient(90deg,#808080 0,#808080 1px,transparent 1px,transparent 2px)"></div><svg class="ic" style="left:54px;top:48px" viewBox="0 0 16 16"><path d="M2 11L5 3L9 1.5L12 4L9 7L7.5 11Z" fill="#f0c820" stroke="#000" stroke-width=".9"/><path d="M6 6L10 2" stroke="#404040" stroke-width="1.3"/><rect x="4.5" y="9.5" width="5.5" height="6" fill="#e8e8e8" stroke="#000"/><rect x="10" y="9.5" width="5.5" height="6" fill="#e8e8e8" stroke="#000"/><path d="M4 9.5H16" stroke="#000" stroke-width="1.5"/></svg><div class="t" style="left:75px;top:51px"><span class="l12" style="margin-right:-9.6px">HWCONFIG</span></div><div style="left:35px;top:72px;width:18px;height:1px;background:repeating-linear-gradient(90deg,#808080 0,#808080 1px,transparent 1px,transparent 2px)"></div><svg class="ic" style="left:54px;top:64px" viewBox="0 0 16 16"><path d="M2 1.5H11.5L14 4V16H2Z" fill="#103c88"/><path d="M2 1.5H11.5L14 4" fill="none" stroke="#081c48"/><rect x="4" y="3.5" width="8" height="4.5" fill="#e8d020"/><rect x="4" y="3.5" width="8" height="1.5" fill="#f8f060"/></svg><div class="t" style="left:75px;top:67px"><span class="l12" style="margin-right:-14.4px">CARD&nbsp;Utility</span></div><div style="left:40px;top:88px;width:13px;height:1px;background:repeating-linear-gradient(90deg,#808080 0,#808080 1px,transparent 1px,transparent 2px)"></div><svg style="left:31px;top:84px" width="9" height="9" viewBox="0 0 9 9"><rect x=".5" y=".5" width="8" height="8" fill="#fff" stroke="#808080"/><rect x="2" y="4" width="5" height="1"/><rect x="4" y="2" width="1" height="5"/></svg><svg class="ic" style="left:54px;top:80px" viewBox="0 0 16 16"><rect x="2" y="1" width="4" height="14" fill="#e8e8e8"/><rect x="6.5" y="1" width="4" height="14" fill="#d0d0d0"/><rect x="11" y="1" width="4" height="14" fill="#c0c0c0"/><path d="M2 2H15" stroke="#000" stroke-width="2.5"/><path d="M3 2h2M7.5 2h2M12 2h2" stroke="#e8d020" stroke-width="1"/><path d="M6.25 3V15M10.75 3V15" stroke="#707070" stroke-width=".8"/></svg><div class="t" style="left:75px;top:83px"><span class="l12" style="margin-right:-16.8px">ES3&nbsp;&nbsp;(Untitled</span></div><div style="left:40px;top:104px;width:13px;height:1px;background:repeating-linear-gradient(90deg,#808080 0,#808080 1px,transparent 1px,transparent 2px)"></div><svg style="left:31px;top:100px" width="9" height="9" viewBox="0 0 9 9"><rect x=".5" y=".5" width="8" height="8" fill="#fff" stroke="#808080"/><rect x="2" y="4" width="5" height="1"/><rect x="4" y="2" width="1" height="5"/></svg><svg class="ic" style="left:54px;top:96px" viewBox="0 0 16 16"><rect x="1.5" y="1.5" width="13" height="13" rx="2.5" fill="#fff" stroke="#182c98" stroke-width="1.3"/><circle cx="8" cy="8" r="3.8" fill="none" stroke="#2838b0" stroke-width="2" stroke-dasharray="1.5 1.480"/><circle cx="8" cy="8" r="2.3" fill="#fff" stroke="#2838b0" stroke-width="1.7"/></svg><div class="t" style="left:75px;top:99px">工作</div><div style="left:35px;top:120px;width:18px;height:1px;background:repeating-linear-gradient(90deg,#808080 0,#808080 1px,transparent 1px,transparent 2px)"></div><svg class="ic" style="left:54px;top:112px" viewBox="0 0 16 16"><path d="M.5 6.5V2.5C.5 1.5 1 .5 2.5 .5H4.5L6 1.5H7.5C8.5 1.5 8.5 2.5 8.5 3V6.5Z" fill="#ffd800" stroke="#000" stroke-width=".9"/><path d="M4.5 6.5V13.5H9M4.5 9.5H9" fill="none" stroke="#1828a0" stroke-width="1.2"/><rect x="9" y="8" width="6.5" height="2.5" fill="#1c6ce0"/><rect x="9" y="12" width="6.5" height="2.5" fill="#18a830"/><path d="M9 12.25H15.5" stroke="#0c5c18" stroke-width=".6"/></svg><div class="t" style="left:75px;top:115px">自定义数据类型</div><div style="left:35px;top:136px;width:18px;height:1px;background:repeating-linear-gradient(90deg,#808080 0,#808080 1px,transparent 1px,transparent 2px)"></div><svg class="ic" style="left:54px;top:128px" viewBox="0 0 16 16"><rect x="3.5" y="4.5" width="11" height="10" fill="#fff" stroke="#000"/><path d="M4.5 12C7 11.5 8 9 10 8.5C12 8 13 7.5 14 6.5" fill="none" stroke="#1838e0" stroke-width="1.3"/><path d="M2.5 6V15.5H12" stroke="#000" fill="none"/><path d="M.5 6.5V2.5C.5 1.5 1 .5 2.5 .5H4.5L6 1.5H7.5C8.5 1.5 8.5 2.5 8.5 3V6.5Z" fill="#ffd800" stroke="#000" stroke-width=".9"/></svg><div class="t" style="left:75px;top:131px"><span class="l12" style="margin-right:-6.0px">E-CAM</span>编辑器</div><div style="left:40px;top:152px;width:13px;height:1px;background:repeating-linear-gradient(90deg,#808080 0,#808080 1px,transparent 1px,transparent 2px)"></div><svg style="left:31px;top:148px" width="9" height="9" viewBox="0 0 9 9"><rect x=".5" y=".5" width="8" height="8" fill="#fff" stroke="#808080"/><rect x="2" y="4" width="5" height="1"/><rect x="4" y="2" width="1" height="5"/></svg><svg class="ic" style="left:54px;top:144px" viewBox="0 0 16 16"><path d="M3 8.5L13 7H16V13L13 14.5H4Z" fill="#909090"/><path d="M3 8.5L13 7V14.5H4Z" fill="#b0b0b0"/><path d="M1 10.5H4V13H1Z" fill="#404040"/><path d="M.5 6.5V2.5C.5 1.5 1 .5 2.5 .5H4.5L6 1.5H7.5C8.5 1.5 8.5 2.5 8.5 3V6.5Z" fill="#ffd800" stroke="#000" stroke-width=".9"/></svg><div class="t" style="left:75px;top:147px">轴单位转换</div><div style="left:40px;top:168px;width:13px;height:1px;background:repeating-linear-gradient(90deg,#808080 0,#808080 1px,transparent 1px,transparent 2px)"></div><svg style="left:31px;top:164px" width="9" height="9" viewBox="0 0 9 9"><rect x=".5" y=".5" width="8" height="8" fill="#fff" stroke="#808080"/><rect x="2" y="4" width="5" height="1"/></svg><svg class="ic" style="left:54px;top:160px" viewBox="0 0 16 16"><circle cx="9.5" cy="8" r="6" fill="#1878c8"/><path d="M7 3C9 1.5 12 2 13 4C11 4 10 6 8 5.5ZM6 9C8 9 9 11 12 10.5C13 12 10 14 8 13.5Z" fill="#3ca0e8"/><path d="M4.5 10C5 13 8 15 12 13.5" stroke="#0c3c70" fill="none"/><path d="M.5 6.5V2.5C.5 1.5 1 .5 2.5 .5H4.5L6 1.5H7.5C8.5 1.5 8.5 2.5 8.5 3V6.5Z" fill="#ffd800" stroke="#000" stroke-width=".9"/></svg><div class="t" style="left:75px;top:163px">全局符号</div><div style="left:62px;top:184px;width:18px;height:1px;background:repeating-linear-gradient(90deg,#808080 0,#808080 1px,transparent 1px,transparent 2px)"></div><svg class="ic" style="left:81px;top:176px" viewBox="0 0 16 16"><circle cx="10" cy="8" r="6" fill="#1878c8"/><path d="M7 3C9 1.5 12 2 13 4C11 4 10 6 8 5.5ZM6 9C8 9 9 11 12 10.5C13 12 10 14 8 13.5Z" fill="#3ca0e8"/><path d="M4.5 10C5 13 8 15 12 13.5" stroke="#0c3c70" fill="none"/><rect x=".5" y="6.5" width="8" height="6" fill="#fff" stroke="#000"/><rect x="2" y="8" width="5" height="3" fill="#48a8f0"/><path d="M1 14.5H8M4.5 12.5V14" stroke="#000"/></svg><div class="t" style="left:102px;top:179px">主符号表</div><div style="left:62px;top:200px;width:18px;height:1px;background:repeating-linear-gradient(90deg,#808080 0,#808080 1px,transparent 1px,transparent 2px)"></div><svg class="ic" style="left:81px;top:192px" viewBox="0 0 16 16"><circle cx="10" cy="8" r="6" fill="#1878c8"/><path d="M7 3C9 1.5 12 2 13 4C11 4 10 6 8 5.5ZM6 9C8 9 9 11 12 10.5C13 12 10 14 8 13.5Z" fill="#3ca0e8"/><path d="M4.5 10C5 13 8 15 12 13.5" stroke="#0c3c70" fill="none"/><path d="M.5 9.5L5.5 5.5V8H11V11.5H5.5V13.5Z" fill="#e83820" stroke="#901808" stroke-width=".6"/></svg><div class="t" style="left:102px;top:195px"><span class="l12" style="margin-right:-10.8px">EtherNet/</span></div><div style="left:62px;top:216px;width:18px;height:1px;background:repeating-linear-gradient(90deg,#808080 0,#808080 1px,transparent 1px,transparent 2px)"></div><svg class="ic" style="left:81px;top:208px" viewBox="0 0 16 16"><circle cx="10" cy="8" r="6" fill="#1878c8"/><path d="M7 3C9 1.5 12 2 13 4C11 4 10 6 8 5.5ZM6 9C8 9 9 11 12 10.5C13 12 10 14 8 13.5Z" fill="#3ca0e8"/><path d="M4.5 10C5 13 8 15 12 13.5" stroke="#0c3c70" fill="none"/><path d="M9.5 11L4.5 7V9.5H0V13H4.5V15.5Z" fill="#60a820" stroke="#305808" stroke-width=".6"/></svg><div class="t" style="left:102px;top:211px"><span class="l12" style="margin-right:-10.8px">EtherNet/</span></div><div style="left:40px;top:232px;width:13px;height:1px;background:repeating-linear-gradient(90deg,#808080 0,#808080 1px,transparent 1px,transparent 2px)"></div><svg style="left:31px;top:228px" width="9" height="9" viewBox="0 0 9 9"><rect x=".5" y=".5" width="8" height="8" fill="#fff" stroke="#808080"/><rect x="2" y="4" width="5" height="1"/></svg><svg class="ic" style="left:54px;top:224px" viewBox="0 0 16 16"><path d="M1 1H4V12H15V15H1Z" fill="#f00000"/><rect x="4" y="5" width="5" height="7" fill="#0000e0"/><rect x="9" y="7" width="5" height="5" fill="#00e000"/><rect x="4" y="1" width="4" height="4" fill="#ffff00"/><rect x="10" y="0" width="5" height="5" fill="#ffc000" stroke="#a05000" stroke-width=".6"/></svg><div class="t" style="left:75px;top:227px">程序</div><div style="left:62px;top:248px;width:18px;height:1px;background:repeating-linear-gradient(90deg,#808080 0,#808080 1px,transparent 1px,transparent 2px)"></div><div style="left:100px;top:240px;width:80px;height:16px;background:#ececec"></div><svg class="ic" style="left:81px;top:240px" viewBox="0 0 16 16"><rect x=".5" y=".5" width="15" height="15" fill="#e4e4e4" stroke="#b0b0b0"/><path d="M0 .5H15.5M.5 0V15.5" stroke="#808080"/><path d="M6.5 4H4.5V12H6.5M9.5 4H11.5V12H9.5M3 8H6M10 8H13" stroke="#000090" stroke-width="1.5" fill="none"/></svg><div class="t" style="left:102px;top:243px"><span class="l12" style="margin-right:-10.8px">Prog0&nbsp;[PR</span></div><div style="left:40px;top:264px;width:13px;height:1px;background:repeating-linear-gradient(90deg,#808080 0,#808080 1px,transparent 1px,transparent 2px)"></div><svg style="left:31px;top:260px" width="9" height="9" viewBox="0 0 9 9"><rect x=".5" y=".5" width="8" height="8" fill="#fff" stroke="#808080"/><rect x="2" y="4" width="5" height="1"/></svg><svg class="ic" style="left:54px;top:256px" viewBox="0 0 16 16"><rect x="1" y="1" width="6" height="6" fill="#ffff00"/><rect x="1" y="7" width="7" height="8" fill="#0000e0"/><rect x="8" y="10" width="6.5" height="5" fill="#00d800"/><rect x="9.5" y="1" width="5.5" height="5" fill="#ffc000" stroke="#a05000" stroke-width=".6"/><path d="M7.5 1V10H9" stroke="#202020" stroke-width="1.2" fill="none"/></svg><div class="t" style="left:75px;top:259px">功能块</div><div style="left:67px;top:280px;width:13px;height:1px;background:repeating-linear-gradient(90deg,#808080 0,#808080 1px,transparent 1px,transparent 2px)"></div><svg style="left:58px;top:276px" width="9" height="9" viewBox="0 0 9 9"><rect x=".5" y=".5" width="8" height="8" fill="#fff" stroke="#808080"/><rect x="2" y="4" width="5" height="1"/><rect x="4" y="2" width="1" height="5"/></svg><svg class="ic" style="left:81px;top:272px" viewBox="0 0 16 16"><rect x=".5" y=".5" width="15" height="15" fill="#e4e4e4" stroke="#b0b0b0"/><path d="M0 .5H15.5M.5 0V15.5" stroke="#808080"/><text x="8" y="12.5" font-family="Liberation Sans,sans-serif" font-size="11" fill="#000090" text-anchor="middle" textLength="11" lengthAdjust="spacingAndGlyphs">ST</text></svg><div class="t" style="left:102px;top:275px"><span class="l12" style="margin-right:-10.8px">DVPES3_CR</span></div><div style="left:40px;top:296px;width:13px;height:1px;background:repeating-linear-gradient(90deg,#808080 0,#808080 1px,transparent 1px,transparent 2px)"></div><svg style="left:31px;top:292px" width="9" height="9" viewBox="0 0 9 9"><rect x=".5" y=".5" width="8" height="8" fill="#fff" stroke="#808080"/><rect x="2" y="4" width="5" height="1"/></svg><svg class="ic" style="left:54px;top:288px" viewBox="0 0 16 16"><rect x="2.5" y="5.5" width="10" height="7" fill="#48a0f0" stroke="#000"/><path d="M3 6.5h9" stroke="#fff"/><path d="M1 14.5h12" stroke="#000" stroke-width="1.4"/><path d="M7.5 12.5v2" stroke="#000" stroke-width="2"/><ellipse cx="10" cy="4.5" rx="4.5" ry="2.5" fill="#e8e8e8" stroke="#000"/><circle cx="10" cy="4.5" r="1.5" fill="#202020"/></svg><div class="t" style="left:75px;top:291px">装置监控表</div><div style="left:62px;top:312px;width:18px;height:1px;background:repeating-linear-gradient(90deg,#808080 0,#808080 1px,transparent 1px,transparent 2px)"></div><svg class="ic" style="left:81px;top:304px" viewBox="0 0 16 16"><rect x="0" y="0" width="16" height="16" fill="#ffc000"/><rect x="1.5" y="1.5" width="13" height="9.5" fill="#fff" stroke="#000"/><rect x="3" y="3" width="10" height="6.5" fill="#48a8e8"/><rect x="3" y="3" width="10" height="2.5" fill="#90ccf8"/><path d="M3 14.2H13" stroke="#000" stroke-width="1.5"/><path d="M8 11V13.5" stroke="#000" stroke-width="3"/></svg><div class="t" style="left:102px;top:307px"><span class="l12" style="margin-right:-10.8px">Monitor&nbsp;T</span></div><div style="left:62px;top:328px;width:18px;height:1px;background:repeating-linear-gradient(90deg,#808080 0,#808080 1px,transparent 1px,transparent 2px)"></div><svg class="ic" style="left:81px;top:320px" viewBox="0 0 16 16"><rect x="0" y="0" width="16" height="16" fill="#ffc000"/><rect x="1.5" y="1.5" width="13" height="9.5" fill="#fff" stroke="#000"/><rect x="3" y="3" width="10" height="6.5" fill="#48a8e8"/><rect x="3" y="3" width="10" height="2.5" fill="#90ccf8"/><path d="M3 14.2H13" stroke="#000" stroke-width="1.5"/><path d="M8 11V13.5" stroke="#000" stroke-width="3"/></svg><div class="t" style="left:102px;top:323px"><span class="l12" style="margin-right:-10.8px">Monitor&nbsp;T</span></div><div style="left:40px;top:344px;width:13px;height:1px;background:repeating-linear-gradient(90deg,#808080 0,#808080 1px,transparent 1px,transparent 2px)"></div><svg style="left:31px;top:340px" width="9" height="9" viewBox="0 0 9 9"><rect x=".5" y=".5" width="8" height="8" fill="#fff" stroke="#808080"/><rect x="2" y="4" width="5" height="1"/><rect x="4" y="2" width="1" height="5"/></svg><svg class="ic" style="left:54px;top:336px" viewBox="0 0 16 16"><rect x="1" y="1" width="4.5" height="14" fill="#808080"/><rect x="6" y="1" width="4.5" height="14" fill="#a0a0a0"/><rect x="11" y="1" width="4.5" height="14" fill="#707070"/><path d="M1 2.5H15.5" stroke="#000" stroke-width="3"/><path d="M2 2h2M7 2h2M12 2h2" stroke="#e8d020"/><path d="M5.5 3V15M10.5 3V15" stroke="#303030" stroke-width=".8"/><path d="M5.5 15.5L7.5 6H9L11 15.5Z" fill="#f0c800"/></svg><div class="t" style="left:75px;top:339px">应用指令</div><div style="left:0;top:535px;width:157px;height:16px;background:#f0f0f0"></div><div style="left:17px;top:535px;width:28px;height:16px;background:#cdcdcd"></div><svg style="left:5px;top:539px" width="6" height="9" viewBox="0 0 6 9" fill="none" stroke="#606060" stroke-width="2"><path d="M5 .5L1 4.5L5 8.5"/></svg><svg style="left:145px;top:539px" width="6" height="9" viewBox="0 0 6 9" fill="none" stroke="#606060" stroke-width="2"><path d="M1 .5L5 4.5L1 8.5"/></svg></div><div class="tabstrip" style="left:2px;top:578px;width:160px;height:26px"></div><div class="tab" style="left:6px;top:578px;width:73px;height:25px"></div><div class="t f13" style="left:11px;top:586px">项目管理区</div><div style="left:162px;top:0;width:2px;height:606px;background:linear-gradient(#f0f0f0,#a0a0a0)"></div><div style="left:0;top:604px;width:164px;height:2px;background:#a0a0a0"></div><div style="left:0;top:0;width:2px;height:606px;background:linear-gradient(#f0f0f0,#a0a0a0)"></div></div>
<div id="tbl" style="left:164px;top:100px;width:1024px;height:124px;background:#fff;border:1px solid #a0a0a0;border-right-color:#a0a0a0"></div><div style="left:166px;top:102px;width:1020px;height:37px;background:#f5f5f5;"></div><div style="left:166px;top:139px;width:15px;height:76px;background:#f0f0f0;"></div><div style="left:180px;top:102px;width:1px;height:37px;background:#a0a0a0;"></div><div style="left:181px;top:139px;width:1px;height:76px;background:#a0a0a0;"></div><div style="left:181px;top:120px;width:1005px;height:1px;background:#a0a0a0;"></div><div style="left:166px;top:139px;width:1020px;height:1px;background:#a0a0a0;"></div><div style="left:166px;top:158px;width:1020px;height:1px;background:#a0a0a0;"></div><div style="left:166px;top:177px;width:1020px;height:1px;background:#a0a0a0;"></div><div style="left:166px;top:196px;width:1020px;height:1px;background:#a0a0a0;"></div><div style="left:166px;top:215px;width:1020px;height:1px;background:#a0a0a0;"></div><div style="left:241px;top:123px;width:1px;height:92px;background:#a0a0a0;"></div><div style="left:396px;top:123px;width:1px;height:92px;background:#a0a0a0;"></div><div style="left:533px;top:123px;width:1px;height:92px;background:#a0a0a0;"></div><div style="left:679px;top:123px;width:1px;height:92px;background:#a0a0a0;"></div><div style="left:809px;top:123px;width:1px;height:92px;background:#a0a0a0;"></div><div style="left:940px;top:123px;width:1px;height:92px;background:#a0a0a0;"></div><div style="left:1185px;top:102px;width:1px;height:113px;background:#a0a0a0;"></div><div class="t" style="left:659px;top:105px">局部符号</div><div class="t f13" style="left:198px;top:124px">编号</div><div class="t f13" style="left:306px;top:124px">类型</div><div class="t f13" style="left:438px;top:124px">符号名称</div><div class="t f13" style="left:593px;top:124px">地址</div><div class="t f13" style="left:718px;top:124px">数据类型</div><div class="t f13" style="left:855px;top:124px">初始值</div><div class="t f13" style="left:1037px;top:124px">符号注释</div><div class="t" style="left:184px;top:143px"><span class="l12" style="margin-right:-1.2px">1</span></div><div class="t" style="left:244px;top:143px"><span class="l12" style="margin-right:-3.6px">VAR</span></div><div class="t" style="left:399px;top:143px"><span class="l12" style="margin-right:-8.4px">DataBuf</span></div><div class="t" style="left:536px;top:143px"><span class="l12" style="margin-right:-12.0px">N/A&nbsp;[Auto]</span></div><div class="t" style="left:682px;top:143px"><span class="l12" style="margin-right:-22.8px">ARRAY&nbsp;[128]&nbsp;OF&nbsp;WORD</span></div><div class="t" style="left:812px;top:143px"><span class="l12" style="margin-right:-3.6px">N/A</span></div><div class="t" style="left:184px;top:162px"><span class="l12" style="margin-right:-1.2px">2</span></div><div class="t" style="left:244px;top:162px"><span class="l12" style="margin-right:-3.6px">VAR</span></div><div class="t" style="left:399px;top:162px"><span class="l12" style="margin-right:-10.8px">DataCount</span></div><div class="t" style="left:536px;top:162px"><span class="l12" style="margin-right:-12.0px">N/A&nbsp;[Auto]</span></div><div class="t" style="left:682px;top:162px"><span class="l12" style="margin-right:-4.8px">WORD</span></div><div class="t" style="left:812px;top:162px"><span class="l12" style="margin-right:-1.2px">8</span></div><div class="t" style="left:184px;top:181px"><span class="l12" style="margin-right:-1.2px">3</span></div><div class="t" style="left:244px;top:181px"><span class="l12" style="margin-right:-3.6px">VAR</span></div><div class="t" style="left:399px;top:181px"><span class="l12" style="margin-right:-8.4px">CRCData</span></div><div class="t" style="left:536px;top:181px"><span class="l12" style="margin-right:-12.0px">N/A&nbsp;[Auto]</span></div><div class="t" style="left:682px;top:181px"><span class="l12" style="margin-right:-4.8px">WORD</span></div><div class="t" style="left:812px;top:181px"><span class="l12" style="margin-right:-1.2px">0</span></div><div class="t" style="left:184px;top:200px"><span class="l12" style="margin-right:-1.2px">4</span></div><div class="t" style="left:244px;top:200px"><span class="l12" style="margin-right:-3.6px">VAR</span></div><div class="t" style="left:399px;top:200px"><span class="l12" style="margin-right:-6.0px">CRC16</span></div><div class="t" style="left:536px;top:200px"><span class="l12" style="margin-right:-12.0px">N/A&nbsp;[Auto]</span></div><div class="t" style="left:682px;top:200px"><span class="l12" style="margin-right:-21.6px">DVPES3_CRC16_Check</span></div><div class="t" style="left:812px;top:200px"><span class="l12" style="margin-right:-3.6px">N/A</span></div><div style="left:165px;top:224px;width:1023px;height:10px;background:#c0c0c0;"></div><div style="left:524px;top:225px;width:304px;height:8px;border:1px solid;border-color:#fff #808080 #808080 #fff"></div><div style="left:540px;top:229px;width:276px;height:1px;background:repeating-linear-gradient(90deg,#1070d8 0,#1070d8 1px,transparent 1px,transparent 3px)"></div><div style="left:541px;top:228px;width:276px;height:1px;background:repeating-linear-gradient(90deg,#fff 0,#fff 1px,transparent 1px,transparent 3px)"></div><svg style="left:528px;top:226px" width="9" height="6" viewBox="0 0 9 6" fill="none" stroke="#000" stroke-width="1.6"><path d="M1 5L4.500 1.500L8 5"/></svg><svg style="left:818px;top:226px" width="9" height="6" viewBox="0 0 9 6" fill="none" stroke="#000" stroke-width="1.6"><path d="M1 5L4.500 1.500L8 5"/></svg><div style="left:164px;top:100px;width:1px;height:606px;background:#a0a0a0;"></div><div style="left:165px;top:234px;width:1023px;height:472px;background:#fff;"></div><div style="left:166px;top:235px;width:20px;height:407px;background:#fbf87a;"></div><div style="left:186px;top:235px;width:2px;height:407px;background:#000;"></div><div style="left:188px;top:235px;width:981px;height:407px;background:#e4e4e4;"></div><div id="ld" style="left:188px;top:235px;width:981px;height:407px;overflow:hidden"><div style="left:239px;top:0px;width:1px;height:353px;background:#000"></div><div style="left:358px;top:-19px;width:121px;height:81px;border:2px solid #000"></div><div style="left:239px;top:12px;width:119px;height:1px;background:#000"></div><div class="t f14" style="left:361px;top:2px;color:#000;line-height:16px;height:16px"><span class="l14" style="margin-right:-2.8px">En</span></div><div style="left:241px;top:43px;width:106px;height:18px;border:1px solid #c6c6c6;background:#e5e5e5"></div><div style="left:347px;top:52px;width:11px;height:1px;background:#000"></div><div class="t f14" style="right:638px;top:44px;color:#0000ff;line-height:16px;height:16px"><span class="l14" style="margin-right:-9.8px">16#0800</span></div><div class="t f14" style="left:361px;top:42px;color:#000;line-height:16px;height:16px"><span class="l14" style="margin-right:-1.4px">S</span></div><div class="t f14" style="left:468px;top:42px;color:#000;line-height:16px;height:16px"><span class="l14" style="margin-right:-1.4px">D</span></div><div style="left:479px;top:52px;width:12px;height:1px;background:#000"></div><div style="left:491px;top:43px;width:106px;height:18px;border:1px solid #c6c6c6;background:#e5e5e5"></div><div class="t f14" style="left:493px;top:44px;color:#0f66c8;line-height:16px;height:16px"><span class="l14" style="margin-right:-14.0px">DataBuf[2]</span></div><div style="left:358px;top:81px;width:121px;height:81px;border:2px solid #000"></div><div class="t f14" style="left:406px;top:84px;color:#000;line-height:16px;height:16px"><span class="l14" style="margin-right:-4.2px">MOV</span></div><div style="left:239px;top:112px;width:119px;height:1px;background:#000"></div><div class="t f14" style="left:361px;top:102px;color:#000;line-height:16px;height:16px"><span class="l14" style="margin-right:-2.8px">En</span></div><div style="left:241px;top:143px;width:106px;height:18px;border:1px solid #c6c6c6;background:#e5e5e5"></div><div style="left:347px;top:152px;width:11px;height:1px;background:#000"></div><div class="t f14" style="right:638px;top:144px;color:#0000ff;line-height:16px;height:16px"><span class="l14" style="margin-right:-9.8px">16#0006</span></div><div class="t f14" style="left:361px;top:142px;color:#000;line-height:16px;height:16px"><span class="l14" style="margin-right:-1.4px">S</span></div><div class="t f14" style="left:468px;top:142px;color:#000;line-height:16px;height:16px"><span class="l14" style="margin-right:-1.4px">D</span></div><div style="left:479px;top:152px;width:12px;height:1px;background:#000"></div><div style="left:491px;top:143px;width:106px;height:18px;border:1px solid #c6c6c6;background:#e5e5e5"></div><div class="t f14" style="left:493px;top:144px;color:#0f66c8;line-height:16px;height:16px"><span class="l14" style="margin-right:-12.6px">DataCount</span></div><div class="t f14" style="left:399px;top:166px;color:#0f66c8;line-height:16px;height:16px"><span class="l14" style="margin-right:-7.0px">CRC16</span></div><div style="left:358px;top:181px;width:121px;height:121px;border:2px solid #000"></div><div class="t f14" style="left:361px;top:184px;color:#000;line-height:16px;height:16px"><span class="l14" style="margin-right:-22.4px">DVPES3_CRC16_Ch<i class="td">~</i></span></div><div style="left:239px;top:212px;width:119px;height:1px;background:#000"></div><div class="t f14" style="left:361px;top:202px;color:#000;line-height:16px;height:16px"><span class="l14" style="margin-right:-2.8px">En</span></div><div class="t f14" style="left:454px;top:202px;color:#000;line-height:16px;height:16px"><span class="l14" style="margin-right:-4.2px">Eno</span></div><div style="left:479px;top:212px;width:120px;height:1px;background:#000"></div><div style="left:599px;top:202px;width:1px;height:21px;background:#000"></div><div style="left:241px;top:243px;width:106px;height:18px;border:1px solid #c6c6c6;background:#e5e5e5"></div><div style="left:347px;top:252px;width:11px;height:1px;background:#000"></div><div class="t f14" style="right:638px;top:244px;color:#0f66c8;line-height:16px;height:16px"><span class="l14" style="margin-right:-9.8px">DataBuf</span></div><div class="t f14" style="left:361px;top:242px;color:#000;line-height:16px;height:16px"><span class="l14" style="margin-right:-9.8px">xDataB<i class="td">~</i></span></div><div class="t f14" style="left:426px;top:242px;color:#000;line-height:16px;height:16px"><span class="l14" style="margin-right:-9.8px">yCRCDa<i class="td">~</i></span></div><div style="left:479px;top:252px;width:12px;height:1px;background:#000"></div><div style="left:491px;top:243px;width:106px;height:18px;border:1px solid #c6c6c6;background:#e5e5e5"></div><div class="t f14" style="left:493px;top:244px;color:#0f66c8;line-height:16px;height:16px"><span class="l14" style="margin-right:-9.8px">CRCData</span></div><div style="left:241px;top:283px;width:106px;height:18px;border:1px solid #c6c6c6;background:#e5e5e5"></div><div style="left:347px;top:292px;width:11px;height:1px;background:#000"></div><div class="t f14" style="right:638px;top:284px;color:#0f66c8;line-height:16px;height:16px"><span class="l14" style="margin-right:-12.6px">DataCount</span></div><div class="t f14" style="left:361px;top:282px;color:#000;line-height:16px;height:16px"><span class="l14" style="margin-right:-9.8px">xDataC<i class="td">~</i></span></div><div style="left:358px;top:321px;width:121px;height:81px;border:2px solid #000"></div><div class="t f14" style="left:406px;top:324px;color:#000;line-height:16px;height:16px"><span class="l14" style="margin-right:-4.2px">MOV</span></div><div style="left:239px;top:352px;width:119px;height:1px;background:#000"></div><div class="t f14" style="left:361px;top:342px;color:#000;line-height:16px;height:16px"><span class="l14" style="margin-right:-2.8px">En</span></div><div style="left:241px;top:383px;width:106px;height:18px;border:1px solid #c6c6c6;background:#e5e5e5"></div><div style="left:347px;top:392px;width:11px;height:1px;background:#000"></div><div class="t f14" style="right:638px;top:384px;color:#0f66c8;line-height:16px;height:16px"><span class="l14" style="margin-right:-9.8px">CRCData</span></div><div class="t f14" style="left:361px;top:382px;color:#000;line-height:16px;height:16px"><span class="l14" style="margin-right:-1.4px">S</span></div><div class="t f14" style="left:468px;top:382px;color:#000;line-height:16px;height:16px"><span class="l14" style="margin-right:-1.4px">D</span></div><div style="left:479px;top:392px;width:12px;height:1px;background:#000"></div><div style="left:491px;top:383px;width:106px;height:18px;border:1px solid #c6c6c6;background:#e5e5e5"></div><div class="t f14" style="left:493px;top:384px;color:#0f66c8;line-height:16px;height:16px"><span class="l14" style="margin-right:-14.0px">DataBuf[3]</span></div></div>
<div style="left:1169px;top:235px;width:17px;height:453px;background:;background:#f0f0f0 repeating-conic-gradient(#fff 0 25%,#f0f0f0 0 50%) 0 0/2px 2px;"></div><div style="left:1169px;top:236px;width:17px;height:17px;background:#f0f0f0;border:1px solid;border-color:#fff #696969 #696969 #fff;box-shadow:inset -1px -1px 0 #a0a0a0"></div><svg style="left:1174px;top:242px" width="7" height="4"><path d="M0 4H7L3.5 0Z"/></svg><div style="left:1169px;top:400px;width:17px;height:242px;background:#f0f0f0;border:1px solid;border-color:#fff #696969 #696969 #fff;box-shadow:inset -1px -1px 0 #a0a0a0"></div><div style="left:1169px;top:671px;width:17px;height:17px;background:#f0f0f0;border:1px solid;border-color:#fff #696969 #696969 #fff;box-shadow:inset -1px -1px 0 #a0a0a0"></div><svg style="left:1174px;top:678px" width="7" height="4"><path d="M0 0H7L3.5 4Z"/></svg><div style="left:166px;top:688px;width:1003px;height:17px;background:;background:#f0f0f0 repeating-conic-gradient(#fff 0 25%,#f0f0f0 0 50%) 0 0/2px 2px;"></div><div style="left:166px;top:688px;width:18px;height:17px;background:#f0f0f0;"></div><div style="left:1152px;top:688px;width:34px;height:17px;background:#f0f0f0;"></div><div style="left:184px;top:688px;width:898px;height:17px;background:#f0f0f0;border:1px solid;border-color:#fff #696969 #696969 #fff;box-shadow:inset -1px -1px 0 #a0a0a0"></div><svg style="left:171px;top:692px" width="6" height="9" viewBox="0 0 6 9" fill="none" stroke="#606060" stroke-width="2"><path d="M5 .5L1 4.5L5 8.5"/></svg><svg style="left:1158px;top:692px" width="6" height="9" viewBox="0 0 6 9" fill="none" stroke="#606060" stroke-width="2"><path d="M1 .5L5 4.5L1 8.5"/></svg><div style="left:1186px;top:100px;width:1px;height:606px;background:#808080;"></div><div style="left:1187px;top:100px;width:1px;height:606px;background:#fff;"></div><div style="left:165px;top:705px;width:1023px;height:1px;background:#a0a0a0;"></div><div id="right" style="left:1188px;top:100px;width:172px;height:607px;background:#f0f0f0"><div style="left:0px;top:0px;width:4px;height:382px;background:linear-gradient(#f0f0f0,#a4a4a4);"></div><div style="left:0px;top:382px;width:4px;height:225px;background:#a0a0a0;"></div><div style="left:0px;top:603px;width:172px;height:4px;background:#a0a0a0;"></div><div style="left:168px;top:0px;width:4px;height:382px;background:linear-gradient(#f0f0f0,#a4a4a4);"></div><div style="left:168px;top:382px;width:4px;height:225px;background:#a0a0a0;"></div><div class="hdr" style="left:2px;top:2px;width:167px;height:20px"></div><div class="t f13" style="left:7px;top:6px">台达函数库<span class="l13" style="margin-right:-1.6px">,&nbsp;</span>预览</div><svg style="left:143px;top:8px" width="7" height="9.500" viewBox="0 0 9 12"><path d="M2 1H7V7H2Z" fill="none" stroke="#000"/><rect x="5" y="1" width="2" height="6"/><rect x="0" y="7" width="9" height="1"/><rect x="4" y="8" width="1" height="4"/></svg><svg style="left:157px;top:9px" width="8" height="8" viewBox="0 0 9 9" stroke="#000" stroke-width="1.1"><path d="M.5 .5L8.5 8.5M8.5 .5L.5 8.5"/></svg><div class="hdr" style="left:4px;top:26px;width:164px;height:20px"></div><div class="t f13" style="left:9px;top:30px">台达函数库</div><svg style="left:153px;top:34px" width="8" height="4"><path d="M0 4H8L4 0Z"/></svg><div class="sunk" style="left:5px;top:48px;width:162px;height:307px"></div><svg style="left:10px;top:55px" width="9" height="9" viewBox="0 0 9 9"><rect x=".5" y=".5" width="8" height="8" fill="#fff" stroke="#808080"/><rect x="2" y="4" width="5" height="1"/><rect x="4" y="2" width="1" height="5"/></svg><div style="left:20px;top:59px;width:12px;height:1px;background:repeating-linear-gradient(90deg,#808080 0,#808080 1px,transparent 1px,transparent 2px)"></div><svg style="left:33px;top:51px" width="16" height="17" viewBox="0 0 16 17"><path d="M8 0L15.5 3.5L8 7L.5 3.5Z" fill="#6cb33f"/><path d="M.5 4.5L7.5 8V16.5L.5 13Z" fill="#e0362c"/><path d="M15.5 4.5L8.5 8V16.5L15.5 13Z" fill="#4a7ebb"/></svg><div class="t" style="left:54px;top:53px">台达函数库</div><div class="tabstrip" style="left:4px;top:356px;width:164px;height:25px"></div><div class="tab" style="left:8px;top:356px;width:73px;height:25px"></div><div class="t f13" style="left:13px;top:364px">台达函数库</div><div class="t f13" style="left:86px;top:364px;width:41px;overflow:hidden">用户自定</div><svg style="left:136px;top:363px" width="6" height="11" viewBox="0 0 6 11"><path d="M5.5 .5V10.5L.5 5.5Z" fill="none" stroke="#a0a0a0"/></svg><svg style="left:153px;top:363px" width="6" height="11" viewBox="0 0 6 11"><path d="M0 0V11L6 5.5Z" fill="#909090"/></svg><div style="left:4px;top:381px;width:166px;height:1px;background:#a0a0a0;"></div><div class="hdr" style="left:4px;top:386px;width:164px;height:20px"></div><div class="t f13" style="left:9px;top:390px">预览</div><svg style="left:153px;top:394px" width="8" height="4"><path d="M0 4H8L4 0Z"/></svg><div style="left:5px;top:408px;width:162px;height:168px;background:#fff;border:1px solid #e3e3e3"></div><div style="left:7px;top:410px;width:158px;height:164px;background:#fff;border:1px solid #a0a0a0"></div><div class="tabstrip" style="left:4px;top:577px;width:164px;height:26px"></div><div class="tab" style="left:8px;top:577px;width:34px;height:25px"></div><div class="t f13" style="left:13px;top:584px">预览</div></div>
<div id="status" style="left:0;top:707px;width:1360px;height:21px;background:#f0f0f0"><div style="left:1px;top:1px;width:51px;height:19px;border:1px solid #dadada;background:linear-gradient(#fbfbfb,#f1f1f1)"></div><div style="left:56px;top:1px;width:31px;height:19px;border:1px solid #dadada;background:linear-gradient(#fbfbfb,#f1f1f1)"></div><div class="t f13" style="left:59px;top:5px">插入</div><div style="left:90px;top:1px;width:101px;height:19px;border:1px solid #dadada;background:linear-gradient(#fbfbfb,#f1f1f1)"></div><div class="t f13" style="left:93px;top:5px">区段<span class="l13" style="margin-right:-2.4px">:&nbsp;1</span></div><div style="left:193px;top:1px;width:131px;height:19px;border:1px solid #dadada;background:linear-gradient(#fbfbfb,#f1f1f1)"></div><div style="left:327px;top:1px;width:161px;height:19px;border:1px solid #dadada;background:linear-gradient(#fbfbfb,#f1f1f1)"></div><div class="t f13" style="left:330px;top:5px"><span class="l13" style="margin-right:-12.0px">807/65504&nbsp;Steps</span></div><div style="left:491px;top:1px;width:61px;height:19px;border:1px solid #dadada;background:linear-gradient(#fbfbfb,#f1f1f1)"></div><div style="left:497px;top:4px;width:9px;height:9px;background:#c8b8b8"></div><div style="left:555px;top:1px;width:72px;height:19px;border:1px solid #dadada;background:linear-gradient(#fbfbfb,#f1f1f1)"></div><div class="t f13" style="left:558px;top:5px">离线状态</div><div style="left:628px;top:1px;width:256px;height:19px;border:1px solid #dadada;background:linear-gradient(#fbfbfb,#f1f1f1)"></div><div class="t f13" style="left:631px;top:5px"><span class="l13" style="margin-right:-27.2px">Driver1,&nbsp;[Ethernet],&nbsp;192.168.1.167</span></div><div style="left:886px;top:1px;width:469px;height:19px;border:1px solid #dadada;background:linear-gradient(#fbfbfb,#f1f1f1)"></div><div class="t f13" style="left:889px;top:5px"><span class="l13" style="margin-right:-2.4px">ES3</span></div></div>
</body></html>
